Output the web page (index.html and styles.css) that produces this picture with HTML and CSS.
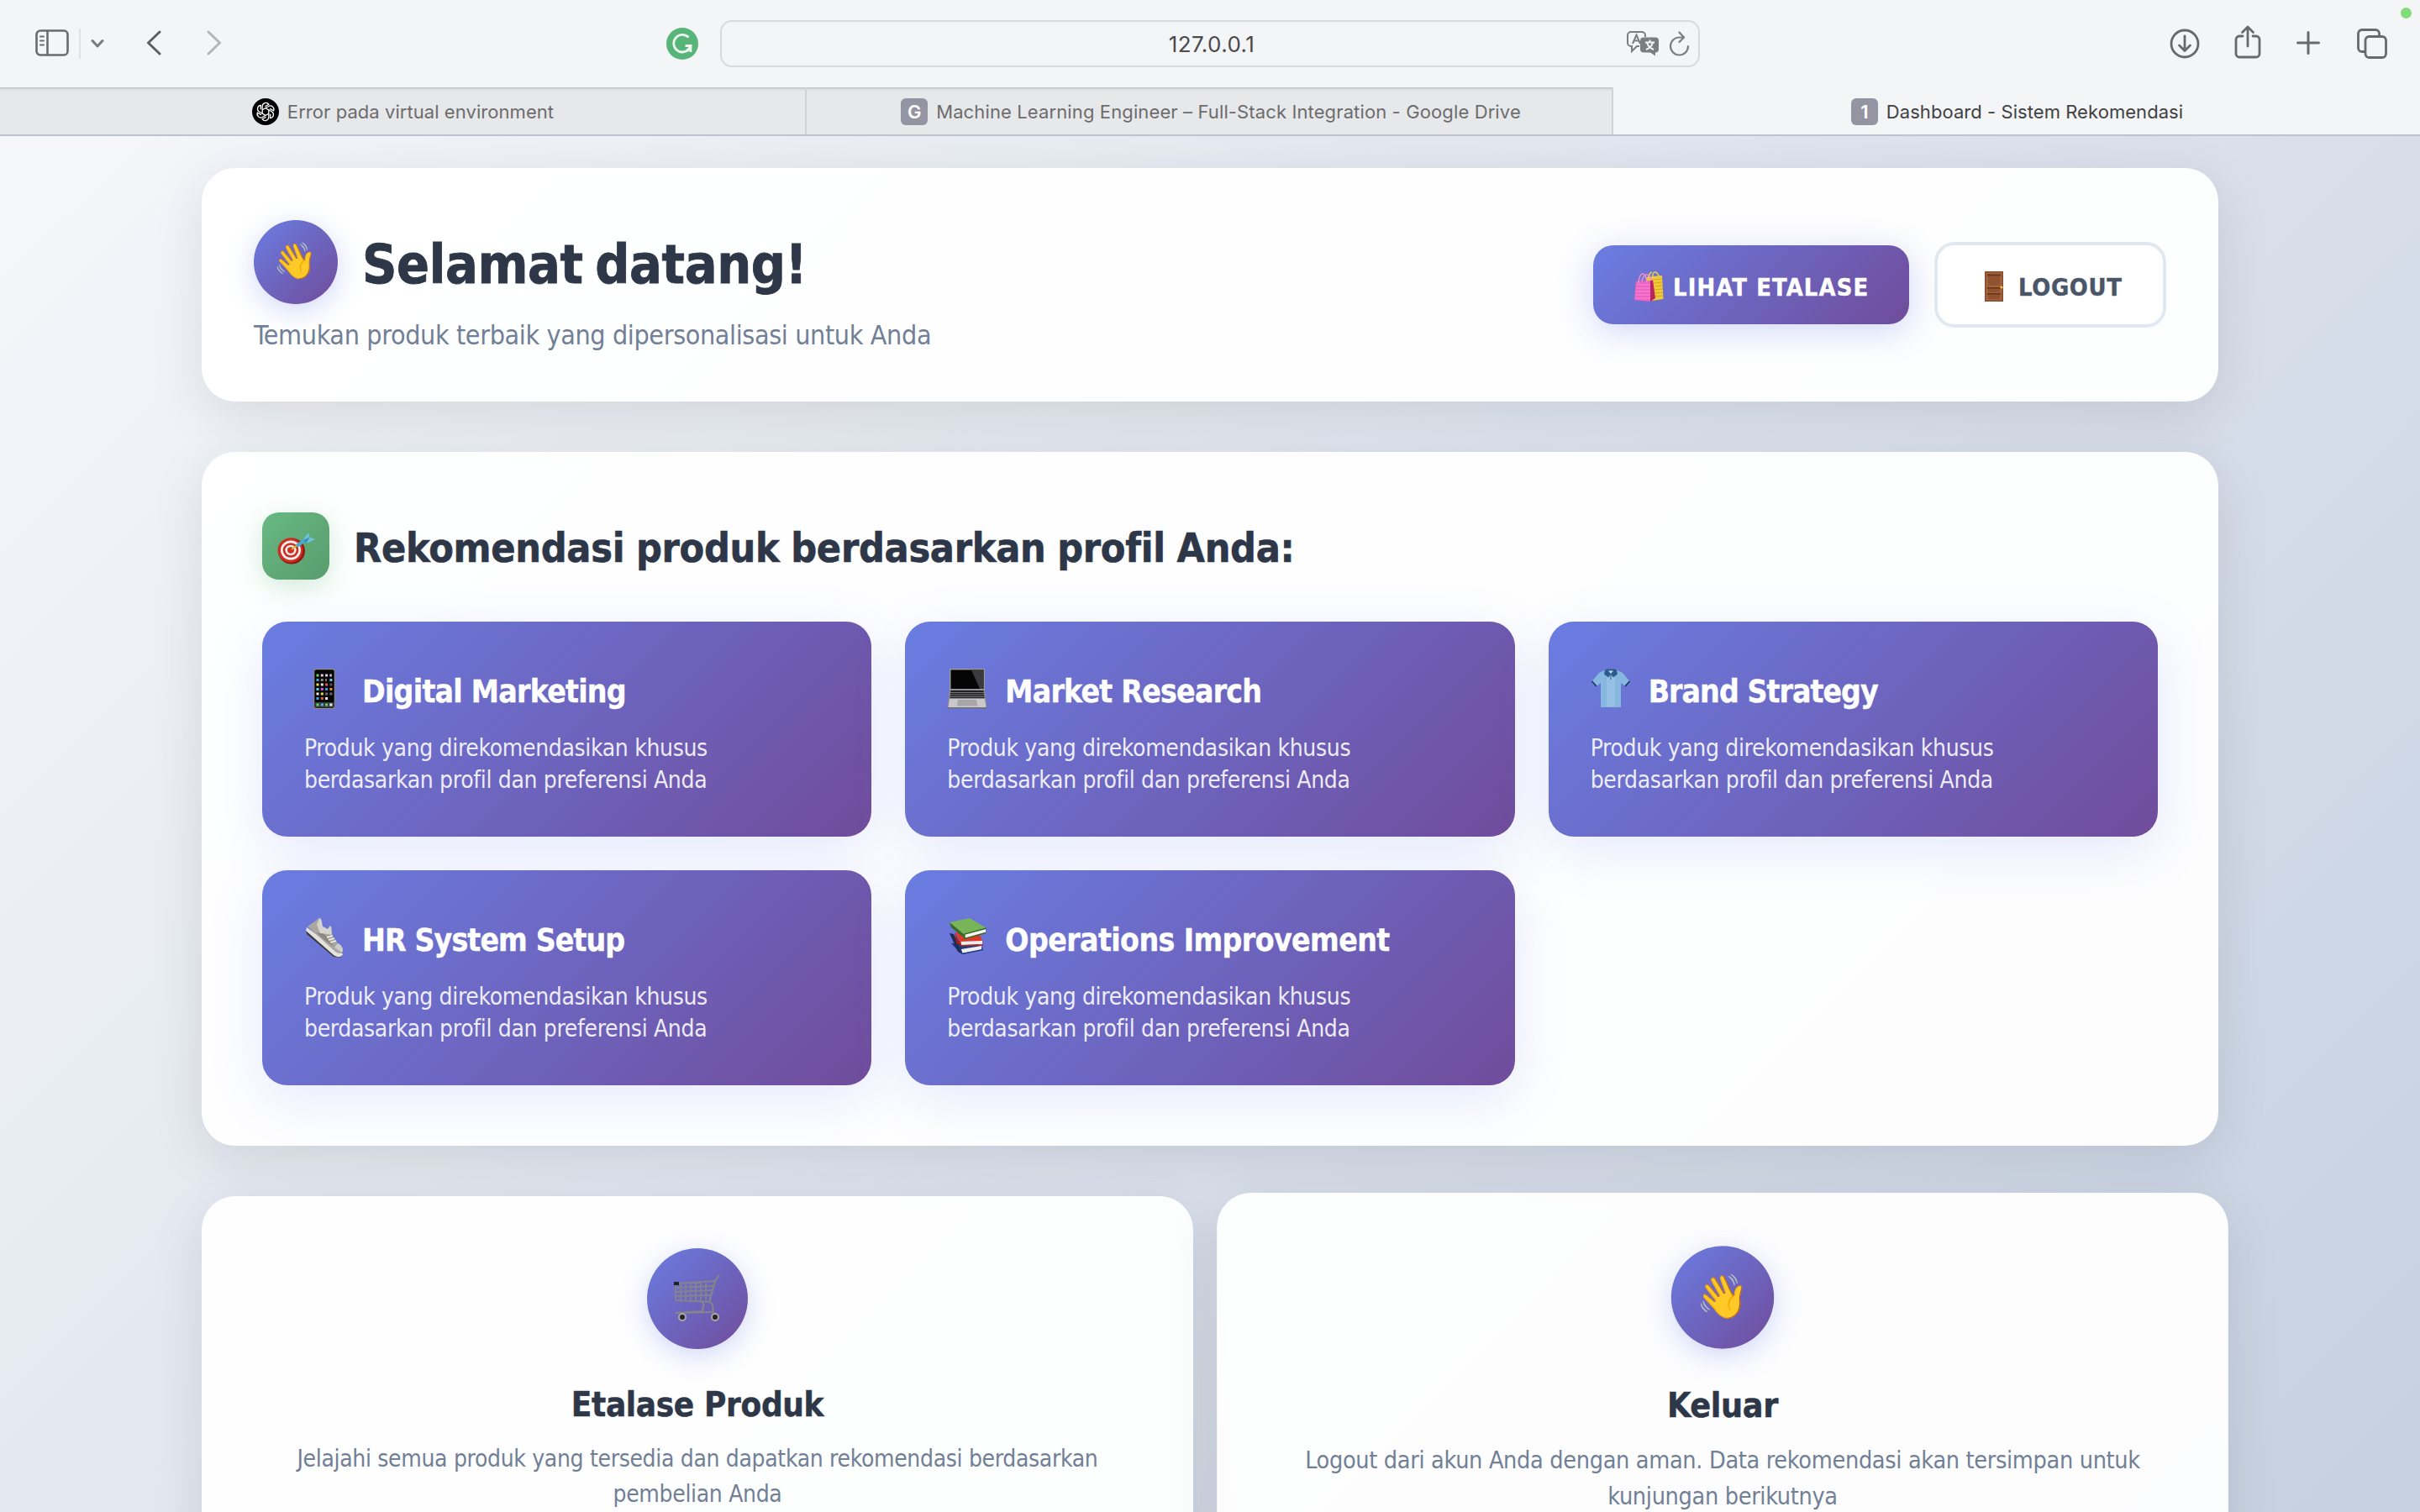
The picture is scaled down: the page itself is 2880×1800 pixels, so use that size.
FILE: index.html
```html
<!DOCTYPE html>
<html lang="id">
<head>
<meta charset="utf-8">
<title>Dashboard - Sistem Rekomendasi</title>
<link rel="stylesheet" href="styles.css">
</head>
<body>
<header class="toolbar">
  <svg class="ic-sidebar" width="40" height="32" viewBox="0 0 40 32" fill="none" stroke="#6b6b6d" stroke-width="2.6" stroke-linecap="round"><rect x="1.5" y="1.5" width="37" height="29" rx="4.5"/><path d="M14.5 2v28"/><path stroke-width="2" d="M6 8.5h4M6 13.5h4M6 18.5h4"/></svg>
  <span class="tool-divider"></span>
  <svg class="ic-chevron" width="16" height="12" viewBox="0 0 16 12" fill="none" stroke="#7a7a7c" stroke-width="3" stroke-linecap="round" stroke-linejoin="round"><path d="M2 2.5l6 6.5 6-6.5"/></svg>
  <svg class="ic-back" width="18" height="30" viewBox="0 0 18 30" fill="none" stroke="#5f5f61" stroke-width="3" stroke-linecap="round" stroke-linejoin="round"><path d="M16 2L2.500 15 16 28"/></svg>
  <svg class="ic-forward" width="18" height="30" viewBox="0 0 18 30" fill="none" stroke="#b4b5b7" stroke-width="3" stroke-linecap="round" stroke-linejoin="round"><path d="M2 2l13.500 13L2 28"/></svg>
  <svg class="ic-grammar" width="38" height="38" viewBox="0 0 38 38" fill="none"><circle cx="19" cy="19" r="19" fill="#57b579"/><path d="M26.500 11.500A10.300 10.300 0 1 0 29 21.500h-6.500M29 21.500v7.500" stroke="#eef8f1" stroke-width="2.8"/><path d="M29.500 21v8l-6-3z" fill="#eef8f1"/></svg>
  <div class="address">
    <span class="address-text">127.0.0.1</span>
    <span class="address-icons">
      <svg width="40" height="30" viewBox="0 0 40 30" fill="none" stroke="#7d7d7f" stroke-width="2"><path d="M16 18h-3l-6 6v-6H6a4 4 0 0 1-4-4V5a4 4 0 0 1 4-4h13a4 4 0 0 1 4 4v2"/><path d="M8 15L12.500 4.500 17 15M9.500 11.500h6"/><path fill="#7d7d7f" stroke="none" d="M21 7.500h14a4 4 0 0 1 4 4v10a4 4 0 0 1-4 4v4l-6-4h-8a4 4 0 0 1-4-4v-10a4 4 0 0 1 4-4z"/><path stroke="#f4f5f7" d="M23 13.500h11M28.500 10.500v3M32 13.500c-1 4-4 7-8 8.500M25 13.500c1 4 4 7 8 8.500"/></svg>
      <svg width="26" height="30" viewBox="0 0 26 30" fill="none" stroke="#7d7d7f" stroke-width="2.200" stroke-linecap="round" stroke-linejoin="round"><path d="M19 7.500H14A10.500 10.500 0 1 0 24 18"/><path d="M13.500 1.500L19 7.500l-5.500 5.500"/></svg>
    </span>
  </div>
  <div class="tools">
    <svg width="36" height="36" viewBox="0 0 36 36" fill="none" stroke="#69696b" stroke-width="2.800" stroke-linecap="round" stroke-linejoin="round"><circle cx="18" cy="18" r="16"/><path d="M18 9v17M11.500 20l6.500 6.500 6.500-6.500"/></svg>
    <svg class="ic-share" width="32" height="40" viewBox="0 0 32 40" fill="none" stroke="#69696b" stroke-width="2.800" stroke-linecap="round" stroke-linejoin="round"><path d="M10 13H6a4 4 0 0 0-4 4v17a4 4 0 0 0 4 4h20a4 4 0 0 0 4-4V17a4 4 0 0 0-4-4h-4M16 25V2.500M9.500 8.500L16 2l6.500 6.500"/></svg>
    <svg class="ic-plus" width="28" height="28" viewBox="0 0 28 28" fill="none" stroke="#69696b" stroke-width="3" stroke-linecap="round"><path d="M14 1.500v25M1.500 14h25"/></svg>
    <svg class="ic-tabs" width="36" height="36" viewBox="0 0 36 36" fill="none" stroke="#69696b" stroke-width="2.800"><rect x="10" y="9.500" width="24.500" height="25" rx="4.500"/><path d="M10 27.500H6a4.500 4.500 0 0 1-4.500-4.500V6A4.500 4.500 0 0 1 6 1.500h16A4.500 4.500 0 0 1 26.500 6v3.500"/></svg>
  </div>
  <span class="camera-dot"></span>
</header>
<nav class="tabs">
  <div class="tab tab-idle">
    <svg width="32" height="32" viewBox="-16 -16 32 32" fill="none" stroke="#fff" stroke-width="1.300"><circle r="16" fill="#000" stroke="none"/><g id="petal"><path d="M-3.800 2.200V-6.500a4.200 4.200 0 0 1 7.600-2.300L-.6-6.300"/></g><use href="#petal" transform="rotate(60)"/><use href="#petal" transform="rotate(120)"/><use href="#petal" transform="rotate(180)"/><use href="#petal" transform="rotate(240)"/><use href="#petal" transform="rotate(300)"/></svg>
    <span class="tab-text t1">Error pada virtual environment</span>
  </div>
  <div class="tab tab-idle tab-second">
    <span class="favicon">G</span>
    <span class="tab-text t2">Machine Learning Engineer – Full-Stack Integration - Google Drive</span>
  </div>
  <div class="tab tab-active">
    <span class="favicon">1</span>
    <span class="tab-text t3">Dashboard - Sistem Rekomendasi</span>
  </div>
</nav>
<main class="page">
  <section class="card welcome">
    <div class="welcome-copy">
      <div class="welcome-row">
        <span class="round round-sm"><span class="emoji">👋</span></span>
        <h1 class="welcome-title">Selamat datang!</h1>
      </div>
      <p class="welcome-sub">Temukan produk terbaik yang dipersonalisasi untuk Anda</p>
    </div>
    <div class="actions">
      <a class="btn btn-primary">
        <svg width="36" height="36" viewBox="0 0 36 36" fill="none"><path fill="#efc93c" d="M14 7l20-2 1.500 28L22 35z"/><path stroke="#d9a520" stroke-width="1.200" d="M24 10l10-1M24 14l10.500-1M25 18l10-1M25 22l10-1M25 26l10-1M25 30l10-1"/><path stroke="#e9cf4b" stroke-width="1.600" d="M18 9c0-5 2-8 4-8M23 8c-1-9 5-9 7-2"/><path fill="#b9255f" d="M18 12l5-2 3 22-6 4z"/><path fill="#ee62c3" d="M3 12l17-1v25L1 34z"/><path stroke="#f58bd6" stroke-width="1.200" d="M3 16h17M3 20h17M2 24h18M2 28h18M2 32h18"/><path stroke="#f08fc6" stroke-width="1.600" d="M6 14c1-14 8-15 10-1M10 12c2-10 8-11 12-1"/></svg>
        <span class="btn-text wide">LIHAT ETALASE</span>
      </a>
      <a class="btn btn-outline">
        <svg width="22" height="36" viewBox="0 0 22 36"><path fill="#8a4a2b" d="M0 0h22v36H0z"/><path fill="#a2643f" d="M1.500 1.500h19v33h-19z"/><path fill="#6b3318" d="M3 3.500h16v2H3zM3 19h16v1.800H3zM3 26h16v1.800H3z"/><path fill="#91522f" d="M4 6h14v11H4zM4 21h14v4H4zM4 28h14v5H4z"/><circle cx="20" cy="19" r="1.600" fill="#e9c84a"/></svg>
        <span class="btn-text">LOGOUT</span>
      </a>
    </div>
  </section>

  <section class="card recs">
    <div class="recs-head">
      <span class="target"><svg width="46" height="40" viewBox="0 0 46 40"><ellipse cx="18" cy="23" rx="16" ry="15.500" fill="#8f1a12"/><ellipse cx="16.500" cy="22" rx="15" ry="14.500" fill="#cf2e22"/><ellipse cx="17" cy="22" rx="12" ry="11.500" fill="#f3efed"/><ellipse cx="17" cy="22" rx="9.300" ry="8.800" fill="#cf2e22"/><ellipse cx="17" cy="22" rx="6.600" ry="6.200" fill="#f3efed"/><ellipse cx="17" cy="22" rx="4" ry="3.700" fill="#cf2e22"/><path d="M18 21l8-6" stroke="#e0b13a" stroke-width="2"/><path d="M24 17l10-7" stroke="#4aa9cc" stroke-width="4"/><path fill="#6cc3de" d="M32 9l6-8 1.500 5.500L46 9l-9 4.500z"/><path fill="#3c8fb3" d="M32 10l7.500-3.500L36 13z"/></svg></span>
      <h2 class="recs-title">Rekomendasi produk berdasarkan profil Anda:</h2>
    </div>
    <div class="grid">
      <article class="item">
        <div class="item-head"><span class="item-icon"><svg width="26" height="48" viewBox="0 0 26 48" stroke-width="3" stroke-dasharray="3 2.300"><rect x=".7" y=".7" width="24.600" height="46.600" rx="2.500" fill="#050506" stroke="#8f8f8a" stroke-width="1.200" stroke-dasharray="none"/><path stroke="#63d35e" d="M3.500 8h3.500"/><path stroke="#e6c8ee" d="M8.800 8h13"/><path stroke="#3da4ee" d="M3.500 13.500h3.500"/><path stroke="#8a8580" d="M8.800 13.500h7"/><path stroke="#67cfee" d="M19.400 13.500h3"/><path stroke="#efd94c" d="M3.500 19h3.500"/><path stroke="#e6e6e6" d="M8.800 19h3"/><path stroke="#e65a4a" d="M14.100 19h3"/><path stroke="#55555a" d="M19.400 19h3"/><path stroke="#5cd3ea" d="M3.500 24.500h3.500"/><path stroke="#cf53dd" d="M8.800 24.500h3"/><path stroke="#3d9cf0" d="M14.100 24.500h3"/><path stroke="#ee8b33" d="M19.400 24.500h3"/><path stroke="#f0f0f0" d="M3.500 30h3.500"/><path stroke="#ecd64b" d="M8.800 30h3"/><path stroke="#6b6b6e" d="M14.100 30h8.300"/><path stroke="#4aa9f0" d="M3.500 35.500h3.500"/><path stroke="#e4573f" d="M8.800 35.500h3"/><path stroke="#f0f0f0" d="M14.100 35.500h3"/><path fill="#3a3d40" stroke="none" d="M1.500 40h23v6h-23z"/><path stroke="#62d65c" d="M3.500 43h3.500"/><path stroke="#4bb4f0" d="M8.800 43h3"/><path stroke="#62d65c" d="M14.100 43h3"/><path stroke="#f0f0f0" d="M19.400 43h3"/></svg></span><h3 class="item-title dm">Digital Marketing</h3></div>
        <p class="item-text">Produk yang direkomendasikan khusus<br>berdasarkan profil dan preferensi Anda</p>
      </article>
      <article class="item">
        <div class="item-head"><span class="item-icon"><svg width="48" height="48" viewBox="0 0 48 48"><path fill="#9a9a9c" d="M3 0h42v25H3z"/><path fill="#050505" d="M4.500 1.500h39V24h-39z"/><path fill="#3b3b3d" d="M29 1.500h14.500V24H39z"/><path fill="#8b8b8e" d="M3 25h42l2.500 21h-47z"/><path fill="#222224" d="M4.500 26h39l1 9h-41z"/><path stroke="#8b8b8e" stroke-width=".8" d="M4 28.500h40M4 31h40M4 33.500h40"/><path fill="#c9c9cb" d="M3 36h42l1.500 10h-45z"/><path fill="#a7a7a9" d="M13 37h22l1 7.500H12z"/><path fill="#707073" d="M.5 46h47v1.500H.5z"/></svg></span><h3 class="item-title mr">Market Research</h3></div>
        <p class="item-text">Produk yang direkomendasikan khusus<br>berdasarkan profil dan preferensi Anda</p>
      </article>
      <article class="item">
        <div class="item-head"><span class="item-icon"><svg width="48" height="48" viewBox="0 0 48 48"><path fill="#86b7df" d="M17 1.500h14l7 3.500 8.500 10-5.500 6-5-4v29H12V17l-5 4-5.500-6L10 5z"/><path fill="#a5cbea" d="M19 9h10v36H19z" opacity=".5"/><path stroke="#16395f" stroke-width="1.800" fill="none" d="M1.500 15L7 21M46.500 15L41 21"/><path fill="#2b5b8c" d="M17 1.500l3-1h8l3 1 1 5-5 4-3-4-3 4-5-4z"/><path fill="#c5def2" d="M21 2.500h6L24 6z"/><path stroke="#2b5b8c" fill="none" d="M24 6v7"/></svg></span><h3 class="item-title bs">Brand Strategy</h3></div>
        <p class="item-text">Produk yang direkomendasikan khusus<br>berdasarkan profil dan preferensi Anda</p>
      </article>
      <article class="item">
        <div class="item-head"><span class="item-icon"><svg width="48" height="48" viewBox="0 0 48 48"><path fill="#3a3a3a" d="M2 14l1 6 32 27 8 1 3-3-6 0z"/><path fill="#e3e2df" d="M3 12l-1 4 33 29c4 3 10 3 11-1l-3-3z"/><path fill="#aaa7a0" d="M4 11L18 1c3 0 3 6 4 10l6 3 3-4c2 2 2 7 2 11l7 10c6 3 7 8 5 11-3 2-7 0-9-2z"/><path fill="#d5d3ce" d="M15 9l3-8c3 0 3 6 4 10l6 3 3-4c2 2 1 6 2 11l-4-1-10-1z"/><path fill="#8b8881" d="M14 18l10 2 12 15-7-4z"/><path stroke="#f3f2ef" stroke-width="1.500" fill="none" d="M27 24l7-2M29 27l7-2M31 30l7-2"/><path fill="#cfcdc8" d="M36 36l4-5c6 3 7 8 5 11z"/></svg></span><h3 class="item-title hr">HR System Setup</h3></div>
        <p class="item-text">Produk yang direkomendasikan khusus<br>berdasarkan profil dan preferensi Anda</p>
      </article>
      <article class="item">
        <div class="item-head"><span class="item-icon"><svg width="48" height="48" viewBox="0 0 48 48"><path fill="#1d3a80" d="M5 31l30-1 8 7-24 7-4-2z"/><path fill="#f0eee8" d="M17 38l24-4v5l-23 4z"/><path stroke="#1d3a80" stroke-width="1.500" fill="none" d="M15 36l3 7.500 25-5"/><path fill="#1b2c58" d="M3 19l5 1 9 23-4-2z"/><path fill="#a71e15" d="M9 18l5 9 2 6-5-2z"/><path fill="#dd3a28" d="M10 18l28 1 4 9-26 1z"/><path fill="#f0eee8" d="M16 29l26-1v4l-25 1z"/><path stroke="#b3261b" stroke-width="1.400" fill="none" d="M15 28l2 6 26-1"/><path fill="#376b28" d="M3 6l18 13v6L5 12z"/><path fill="#78b558" d="M3 6l24-5 20 12-26 8z"/><path fill="#f5f4ef" d="M21 20l25-6v4l-25 7z"/><path stroke="#376b28" stroke-width="1.400" fill="none" d="M47 13l-26 7v5.500L46 18.500"/></svg></span><h3 class="item-title oi">Operations Improvement</h3></div>
        <p class="item-text">Produk yang direkomendasikan khusus<br>berdasarkan profil dan preferensi Anda</p>
      </article>
    </div>
  </section>

  <div class="panels">
    <section class="card panel">
      <span class="round round-lg"><svg width="56" height="58" viewBox="0 0 56 58" fill="none" stroke="#85838d" stroke-width="1.800"><path stroke-width="2.400" d="M54 2l-5 7-7 25"/><path d="M2 12l46-3M2 17l45-2M2 22l44-2M2 27l43-1M2 32l41 2M2 12v20M8 12v20M14 11v22M20 11v22M26 10v23M32 10v23M38 10v24"/><path stroke-width="2.200" d="M33 34c6 3-1 9 1 11L2 47M43 34c6 5 2 8 4 13M3 47l45-1"/><g fill="#26242a" stroke="#aaa8a5" stroke-width="2"><circle cx="10" cy="52" r="4"/><circle cx="49" cy="52" r="4"/></g><path fill="#1d2230" stroke="none" d="M0 10h6v4H0z"/></svg></span>
      <h3 class="panel-title">Etalase Produk</h3>
      <p class="panel-text">Jelajahi semua produk yang tersedia dan dapatkan rekomendasi berdasarkan<br>pembelian Anda</p>
    </section>
    <section class="card panel panel-hover">
      <span class="round round-lg"><span class="emoji">👋</span></span>
      <h3 class="panel-title">Keluar</h3>
      <p class="panel-text">Logout dari akun Anda dengan aman. Data rekomendasi akan tersimpan untuk<br>kunjungan berikutnya</p>
    </section>
  </div>
</main>
</body>
</html>
```
FILE: styles.css
```css
* { box-sizing: border-box; }
body {
  margin: 0;
  height: 1800px;
  overflow: hidden;
  display: flex;
  flex-direction: column;
  font-family: "DejaVu Sans Condensed", "DejaVu Sans", sans-serif;
  background: #f4f5f7;
}
h1, h2, h3, p { margin: 0; }
svg { display: block; flex: none; }

/* Browser toolbar */
.toolbar {
  position: relative;
  flex: none;
  height: 104px;
  padding-left: 42px;
  display: flex;
  align-items: center;
}
.ic-sidebar { margin-top: -2px; }
.tool-divider { width: 2px; height: 36px; margin-left: 12px; background: #e1e2e4; }
.ic-chevron { margin-left: 12px; }
.ic-back { margin: -2px 0 0 50px; }
.ic-forward { margin: -2px 0 0 54px; }
.ic-grammar { margin-left: 529px; }
.address {
  width: 1166px;
  height: 56px;
  margin-left: 26px;
  padding-right: 10px;
  border: 2px solid #d9dadc;
  border-radius: 14px;
  display: grid;
  grid-template-columns: 1fr auto 1fr;
  align-items: center;
}
.address-text {
  grid-column: 2;
  padding: 2px 0 0 14px;
  font: 26px/32px Inter, sans-serif;
  letter-spacing: .4px;
  color: #4a4a4c;
}
.address-icons { display: flex; gap: 10px; justify-content: flex-end; }
.tools { display: flex; align-items: center; margin: -1px 0 0 559px; gap: 42px; }
.ic-share { margin: -4px 0 0 -1px; }
.ic-plus { margin-top: -1px; }
.ic-tabs { margin-left: 2px; }
.camera-dot {
  position: absolute;
  top: 9px;
  left: 2857px;
  width: 13px;
  height: 13px;
  border-radius: 50%;
  background: #82dc7b;
}

/* Tab strip */
.tabs {
  flex: none;
  height: 58px;
  display: grid;
  grid-template-columns: 960px 960px 960px;
  border-bottom: 2px solid #bcc3cf;
}
.tab {
  padding: 1px 0 0 1px;
  display: flex;
  align-items: center;
  justify-content: center;
  gap: 10px;
  color: #6c6c6e;
}
.tab-idle {
  background: linear-gradient(#c5c6c8 0, #c5c6c8 1px, #dedfe1 2px, #e7e8ea 6px);
  border-right: 2px solid #d2d3d5;
}
.tab-second { padding-left: 4px; }
.tab-active { color: #414143; }
.tab-text { font: 22px/28px Inter, sans-serif; white-space: nowrap; }
.t1 { letter-spacing: .06px; }
.t2 { letter-spacing: .12px; }
.t3 { letter-spacing: .06px; }
.favicon {
  width: 32px;
  height: 32px;
  border-radius: 6px;
  background: #9594a3;
  color: #fff;
  font: 600 22px/32px Inter, sans-serif;
  text-align: center;
}

/* Page */
.page {
  flex: none;
  height: 1638px;
  overflow: hidden;
  padding: 38px 240px 0;
  background: linear-gradient(135deg, #f5f7fa, #c6d0e1);
}
.card {
  background: rgba(255, 255, 255, .95);
  border-radius: 40px;
  box-shadow: 0 16px 64px rgba(0, 0, 0, .1);
}
.emoji { font-family: "Noto Color Emoji", sans-serif; line-height: 1; }

.welcome {
  height: 278px;
  padding: 62px 62px 0;
  display: flex;
  justify-content: space-between;
}
.welcome-row { display: flex; align-items: center; gap: 29px; height: 100px; }
.welcome-title {
  padding-top: 5px;
  font-size: 64px;
  line-height: 80px;
  letter-spacing: -.4px;
  word-spacing: -5px;
  -webkit-text-stroke: .8px;
  color: #2d3748;
}
.welcome-sub {
  margin-top: 13px;
  font-size: 32px;
  line-height: 48px;
  letter-spacing: -.38px;
  color: #718096;
}
.round {
  display: flex;
  align-items: center;
  justify-content: center;
  border-radius: 50%;
  background: linear-gradient(135deg, #6a7de2, #704c9b);
  box-shadow: 0 8px 32px rgba(102, 126, 234, .3);
}
.round-sm { width: 100px; height: 100px; padding-bottom: 2px; font-size: 42px; }
.round-lg { width: 120px; height: 120px; padding-bottom: 3px; font-size: 50px; }

.actions { display: flex; align-items: center; gap: 30px; height: 154px; }
.btn {
  display: flex;
  align-items: center;
  border-radius: 24px;
  font-size: 28.8px;
  font-weight: bold;
}
.btn-primary {
  width: 376px;
  height: 94px;
  padding-left: 48px;
  gap: 11px;
  color: #fff;
  background: linear-gradient(135deg, #6a7de2, #704c9b);
  box-shadow: 0 8px 40px rgba(102, 126, 234, .3);
}
.btn-primary svg, .btn-outline svg { margin-top: 4px; }
.btn-outline {
  width: 276px;
  height: 102px;
  padding-left: 56px;
  gap: 18px;
  border: 4px solid #e2e8f0;
  background: #fff;
  color: #4a5568;
}
.btn-text { padding-top: 5px; line-height: 36px; letter-spacing: .7px; white-space: nowrap; -webkit-text-stroke: .4px; }
.btn-text.wide { letter-spacing: 1.15px; }

.recs { height: 826px; margin-top: 60px; padding: 72px 72px 0; }
.recs-head { display: flex; align-items: center; gap: 29px; }
.target {
  width: 80px;
  height: 80px;
  padding-top: 6px;
  border-radius: 20px;
  display: flex;
  align-items: center;
  justify-content: center;
  background: linear-gradient(135deg, #68b984, #589c6c);
  box-shadow: 0 8px 30px rgba(104, 185, 132, .3);
}
.recs-title {
  padding-top: 3px;
  font-size: 48px;
  line-height: 60px;
  letter-spacing: -.28px;
  word-spacing: -1px;
  -webkit-text-stroke: .6px;
  color: #2d3748;
}
.grid {
  margin-top: 50px;
  display: grid;
  grid-template-columns: repeat(3, 1fr);
  grid-auto-rows: 256px;
  gap: 40px;
}
.item {
  padding: 50px 50px 0;
  border-radius: 30px;
  color: #fff;
  background: linear-gradient(135deg, #6a7de2, #704c9b);
  box-shadow: 0 16px 64px rgba(102, 126, 234, .16);
}
.item-head { display: flex; align-items: center; height: 60px; gap: 21px; }
.item-icon { width: 48px; height: 48px; display: flex; align-items: center; justify-content: center; }
.item-title { padding-top: 8px; font-size: 37px; line-height: 48px; white-space: nowrap; -webkit-text-stroke: .4px; }
.dm { letter-spacing: -.72px; }
.mr { letter-spacing: -.75px; }
.bs { letter-spacing: -.93px; }
.hr { letter-spacing: -.87px; }
.oi { letter-spacing: -.59px; }
.item-text {
  margin-top: 22px;
  font-size: 28px;
  line-height: 38px;
  letter-spacing: -.34px;
  color: rgba(255, 255, 255, .9);
  white-space: nowrap;
}

.panels { margin-top: 60px; display: grid; grid-template-columns: 1180px 1180px; gap: 40px; }
.panel {
  height: 440px;
  padding-top: 62px;
  display: flex;
  flex-direction: column;
  align-items: center;
  text-align: center;
}
.panel-hover { transform: translateY(-4px) scale(1.02); transform-origin: 50% 0; }
.panel-title { margin-top: 41px; font-size: 40px; line-height: 50px; letter-spacing: -.35px; color: #2d3748; -webkit-text-stroke: .5px; }
.panel-text { margin-top: 19px; font-size: 28px; line-height: 42px; letter-spacing: -.33px; color: #718096; white-space: nowrap; }
```
